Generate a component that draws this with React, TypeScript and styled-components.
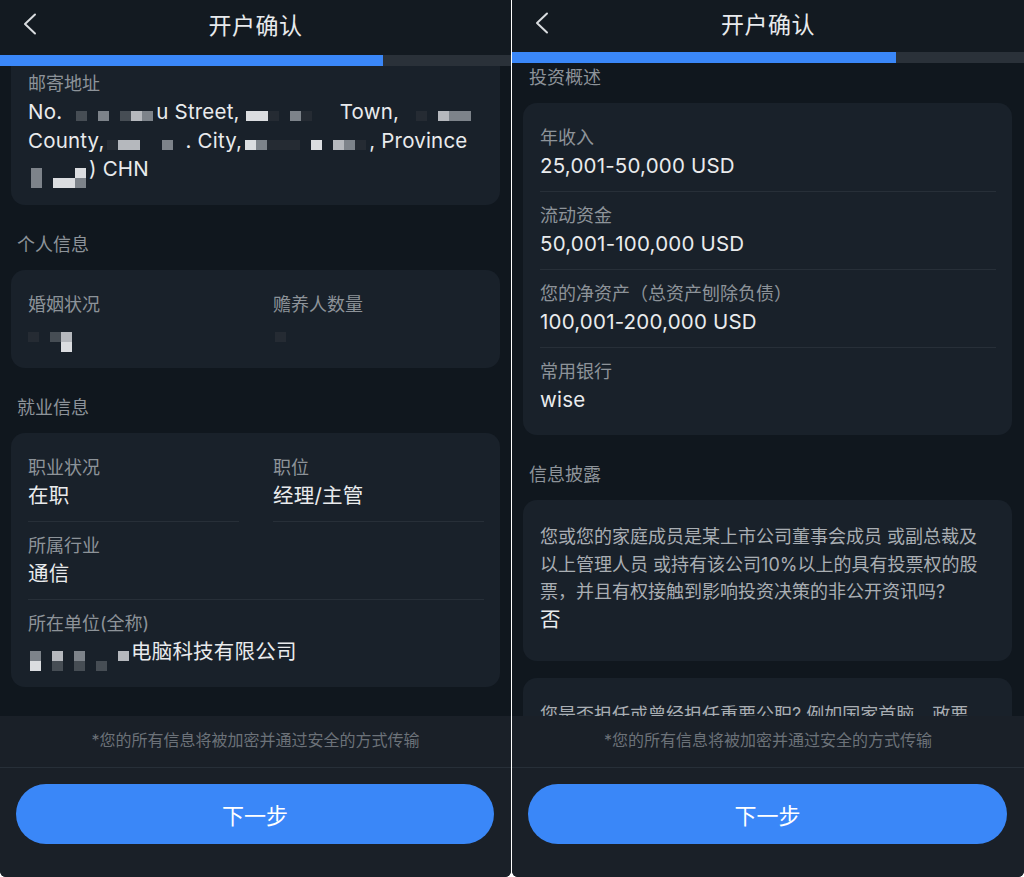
import React, { useLayoutEffect, useRef } from "react";
import styled, { createGlobalStyle } from "styled-components";

const color = {
  header: "#131a21",
  body: "#10171e",
  card: "#19212a",
  footer: "#1a2028",
  line: "#272f38",
  track: "#2a3139",
  blue: "#3a87f8",
  title: "#e8eaed",
  label: "#8d9399",
  value: "#e9ebed",
  question: "#a9aeb3",
  note: "#6c7279",
};

const shades: Record<string, string> = {
  ".": "transparent",
  w: "#eceef0",
  l: "#c2c6ca",
  g: "#868c92",
  d: "#4a5158",
  k: "#262d34",
};

const GlobalStyle = createGlobalStyle`
  html, body {
    margin: 0;
    padding: 0;
    background: #ffffff;
  }
  body {
    font-family: Inter, "Noto Sans CJK SC", sans-serif;
    -webkit-font-smoothing: antialiased;
  }
  * {
    box-sizing: border-box;
  }
`;

const Screens = styled.div`
  display: flex;
  gap: 1px;
  width: 1024px;
  height: 877px;
  background: #ffffff;
`;

const Phone = styled.section<{ $width: number }>`
  flex: 0 0 ${p => p.$width}px;
  height: 877px;
  display: flex;
  flex-direction: column;
  background: ${color.body};
  border-radius: 0 0 6px 6px;
  overflow: hidden;
`;

const Header = styled.header<{ $height: number }>`
  flex: 0 0 ${p => p.$height}px;
  display: grid;
  grid-template-columns: 60px 1fr 60px;
  align-items: center;
  padding-bottom: 7px;
  background: ${color.header};
`;

const BackButton = styled.button`
  display: flex;
  align-items: center;
  padding: 0 0 0 23px;
  border: 0;
  background: none;
  cursor: pointer;

  & > svg {
    display: block;
    width: 14px;
    height: 22px;
  }
`;

const Title = styled.h1`
  margin: 0;
  text-align: center;
  font-size: 23px;
  font-weight: 400;
  color: ${color.title};
  letter-spacing: 0.5px;
`;

const Progress = styled.div`
  flex: 0 0 11px;
  background: ${color.track};
`;

const ProgressFill = styled.div<{ $pct: number }>`
  width: ${p => p.$pct}%;
  height: 100%;
  background: ${color.blue};
`;

const ScrollArea = styled.div`
  flex: 1;
  overflow-y: auto;
  scrollbar-width: none;

  &::-webkit-scrollbar {
    display: none;
  }
`;

const Content = styled.div<{ $right: number }>`
  padding: 0 ${p => p.$right}px 60px 11px;
`;

const SectionTitle = styled.h2`
  margin: 0;
  padding: 28px 6px 13px;
  height: 65px;
  font-size: 18px;
  line-height: 24px;
  font-weight: 400;
  color: ${color.label};
`;

const Card = styled.div`
  padding: 11px 16px 9px 17px;
  background: ${color.card};
  border-radius: 14px;

  & + & {
    margin-top: 17px;
  }
`;

const FieldGrid = styled.div`
  display: grid;
  grid-template-columns: 1fr 1fr;
  column-gap: 34px;
`;

const Field = styled.div<{ $divided?: boolean; $wide?: boolean }>`
  padding: 12px 0 ${p => (p.$divided ? 11 : 12)}px;
  grid-column: ${p => (p.$wide ? "1 / -1" : "auto")};
  border-bottom: ${p => (p.$divided ? `1px solid ${color.line}` : "0")};
`;

const QuestionField = styled(Field)`
  padding-bottom: 18px;
`;

const Label = styled.div`
  height: 24px;
  font-size: 18px;
  line-height: 24px;
  color: ${color.label};
  white-space: nowrap;
`;

const QuestionLine = styled.div`
  height: 27.5px;
  font-size: 18px;
  line-height: 27.5px;
  color: ${color.question};
  white-space: nowrap;
`;

const Value = styled.div<{ $first?: boolean; $height?: number }>`
  margin-top: ${p => (p.$first ? 2 : 0)}px;
  height: ${p => p.$height ?? 28}px;
  font-size: 20.5px;
  line-height: ${p => p.$height ?? 28}px;
  color: ${color.value};
  letter-spacing: 0.2px;
  white-space: nowrap;
`;

const MosaicGrid = styled.span<{ $cols: number; $gap: number }>`
  display: inline-grid;
  grid-template-columns: repeat(${p => p.$cols}, 11px);
  grid-auto-rows: 10px;
  vertical-align: -2px;
  margin: 0 ${p => p.$gap}px;
`;

const MosaicCell = styled.span<{ $shade: string }>`
  background: ${p => p.$shade};
  opacity: 0.92;
`;

const Footer = styled.footer`
  flex: 0 0 auto;
  background: ${color.footer};
`;

const Note = styled.p`
  margin: 0;
  height: 52px;
  display: flex;
  align-items: center;
  justify-content: center;
  padding-bottom: 5px;
  font-size: 16px;
  color: ${color.note};
  border-bottom: 1px solid ${color.line};
`;

const ButtonBar = styled.div`
  padding: 16px 17px 33px 16px;
`;

const NextButton = styled.button`
  width: 100%;
  height: 60px;
  border: 0;
  border-radius: 30px;
  background: ${color.blue};
  color: #ffffff;
  font-family: inherit;
  font-size: 22px;
  cursor: pointer;
`;

const Mosaic: React.FC<{ rows: string[]; gap?: number }> = ({ rows, gap = 5 }) => (
  <MosaicGrid $cols={rows[0].length} $gap={gap}>
    {rows.flatMap((row, r) => row.split("").map((c, i) => <MosaicCell key={`${r}-${i}`} $shade={shades[c]} />))}
  </MosaicGrid>
);

const BackIcon = () => (
  <svg viewBox="0 0 14 22" fill="none">
    <polyline points="12,1.5 2,11 12,20.5" stroke="#d9dcdf" strokeWidth="2" strokeLinecap="round" strokeLinejoin="round" />
  </svg>
);

const Screen: React.FC<{
  width: number;
  headerHeight: number;
  scrollTop: number;
  children: React.ReactNode;
}> = ({ width, headerHeight, scrollTop, children }) => {
  const scrollRef = useRef<HTMLDivElement>(null);

  useLayoutEffect(() => {
    if (scrollRef.current) scrollRef.current.scrollTop = scrollTop;
  }, [scrollTop]);

  return (
    <Phone $width={width}>
      <Header $height={headerHeight}>
        <BackButton aria-label="返回">
          <BackIcon />
        </BackButton>
        <Title>开户确认</Title>
        <span />
      </Header>
      <Progress>
        <ProgressFill $pct={75} />
      </Progress>
      <ScrollArea ref={scrollRef}>
        <Content $right={width - 500}>{children}</Content>
      </ScrollArea>
      <Footer>
        <Note>*您的所有信息将被加密并通过安全的方式传输</Note>
        <ButtonBar>
          <NextButton>下一步</NextButton>
        </ButtonBar>
      </Footer>
    </Phone>
  );
};

const InfoField: React.FC<{
  label: string;
  divided?: boolean;
  wide?: boolean;
  children: React.ReactNode;
}> = ({ label, divided, wide, children }) => (
  <Field $divided={divided} $wide={wide}>
    <Label>{label}</Label>
    <Value $first>{children}</Value>
  </Field>
);

const investment = [
  { label: "年收入", value: "25,001-50,000 USD" },
  { label: "流动资金", value: "50,001-100,000 USD" },
  { label: "您的净资产（总资产刨除负债）", value: "100,001-200,000 USD" },
  { label: "常用银行", value: "wise" },
];

const disclosureLines = [
  "您或您的家庭成员是某上市公司董事会成员 或副总裁及",
  "以上管理人员 或持有该公司10%以上的具有投票权的股",
  "票，并且有权接触到影响投资决策的非公开资讯吗?",
];

const officeLines = ["您是否担任或曾经担任重要公职? 例如国家首脑、政要", "高官、高级军官或国有企业高管等?"];

export default function App() {
  return (
    <>
      <GlobalStyle />
      <Screens>
        <Screen width={511} headerHeight={55} scrollTop={17}>
          <Card>
            <Field>
              <Label>邮寄地址</Label>
              <Value $first $height={28.5}>
                No.
                <Mosaic rows={[".d.g.dlg"]} gap={3} />
                u Street,
                <Mosaic rows={["wwk.gk.."]} gap={6} />
                Town,
                <Mosaic rows={[".k.lgg"]} gap={6} />
              </Value>
              <Value $height={28.5}>
                County,
                <Mosaic rows={["kll..g."]} gap={2} />. City,
                <Mosaic rows={["wgkkk.w.lgk"]} gap={3} />, Province
              </Value>
              <Value $height={28.5}>
                <Mosaic rows={["g...w", "g.wwg"]} gap={3} />) CHN
              </Value>
            </Field>
          </Card>

          <SectionTitle>个人信息</SectionTitle>
          <Card>
            <FieldGrid>
              <InfoField label="婚姻状况">
                <Mosaic rows={["k.dl", "...w"]} gap={0} />
              </InfoField>
              <InfoField label="赡养人数量">
                <Mosaic rows={["k"]} gap={2} />
              </InfoField>
            </FieldGrid>
          </Card>

          <SectionTitle>就业信息</SectionTitle>
          <Card>
            <FieldGrid>
              <InfoField label="职业状况" divided>
                在职
              </InfoField>
              <InfoField label="职位" divided>
                经理/主管
              </InfoField>
              <InfoField label="所属行业" divided wide>
                通信
              </InfoField>
              <InfoField label="所在单位(全称)" wide>
                <Mosaic rows={["g.l.g...l", "w.d.d.d.."]} gap={2} />
                电脑科技有限公司
              </InfoField>
            </FieldGrid>
          </Card>
        </Screen>

        <Screen width={512} headerHeight={52} scrollTop={25}>
          <SectionTitle>投资概述</SectionTitle>
          <Card>
            {investment.map((item, i) => (
              <InfoField key={item.label} label={item.label} divided={i < investment.length - 1}>
                {item.value}
              </InfoField>
            ))}
          </Card>

          <SectionTitle>信息披露</SectionTitle>
          <Card>
            <QuestionField>
              {disclosureLines.map(line => (
                <QuestionLine key={line}>{line}</QuestionLine>
              ))}
              <Value>否</Value>
            </QuestionField>
          </Card>
          <Card>
            <QuestionField>
              {officeLines.map(line => (
                <QuestionLine key={line}>{line}</QuestionLine>
              ))}
              <Value>否</Value>
            </QuestionField>
          </Card>
        </Screen>
      </Screens>
    </>
  );
}
